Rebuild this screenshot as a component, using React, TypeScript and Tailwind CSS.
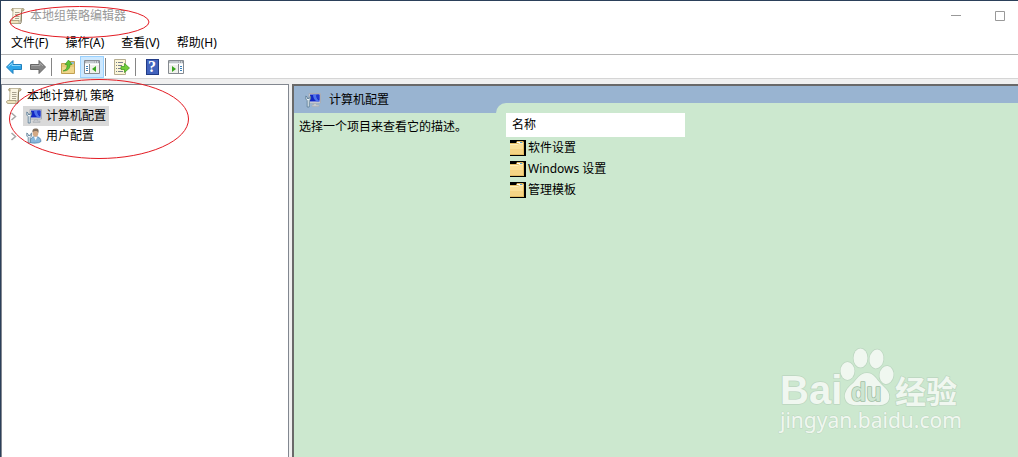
import React from "react";

function ScrollIcon() {
  return (
    <svg width="16" height="16" viewBox="0 0 16 16" aria-hidden="true" className="shrink-0">
      <path d="M3 .5h10.500c1.800 0 1.800 2.500 0 2.500H12.500l-.5 10H3.500L4 2.500" fill="#fbf6e3" stroke="#b3a98c" strokeWidth=".8" />
      <path d="M4 .5C2 .5 2 3 4 3z" fill="#cdbf94" stroke="#a39873" strokeWidth=".8" />
      <path d="M12.500 3h1.500c1.300-.3 1.300-2.300 0-2.500-1.300.2-1.500 1.300-1.500 2.500z" fill="#d9cda6" stroke="#998e6d" strokeWidth=".8" />
      <path d="M1.500 12.500h8.500c-.4 1.500.3 2.800 1.500 3H2C.2 15.300.2 12.800 1.500 12.500z" fill="#eee2bc" stroke="#a39873" strokeWidth=".8" />
      <path d="M12.500 3.500l-.3 9.500c0 1.500-.3 2.500-1.200 2.500" fill="none" stroke="#7f7659" />
      <path d="M6 4.500h4.500M6 6.500h4.500M6 8.500h4.500M6 10.500h4" stroke="#aaa390" />
    </svg>
  );
}

function ComputerIcon() {
  return (
    <svg width="16" height="16" viewBox="0 0 16 16" aria-hidden="true" className="shrink-0">
      <path d="M4 1.500h11.500v9.500H4z" fill="#dfe1e5" stroke="#a9adb5" />
      <path d="M5 2.500h9.500v7H5z" fill="#1226c4" />
      <path d="M8 2.500h3.500c-.5 3 .5 5 3 6.500v.5H12C9 8 8 5 8 2.500z" fill="#4f74ea" />
      <path d="M11.500 2.500h3V8c-2.500-1-3.300-3-3-5.500z" fill="#2038cf" />
      <path d="M8.500 11.500h3v1.500H14v1.500H7v-1.500h1.500z" fill="#c6c9ce" stroke="#a5a8ae" strokeWidth=".5" />
      <path d="M.8 4v3l1.400 1.500V15h2V8.500L5.600 7V4L4.300 5.200v1.300H2.200V5.200z" fill="#edf3f7" stroke="#53758f" strokeWidth=".8" />
    </svg>
  );
}

function UserIcon() {
  return (
    <svg width="16" height="16" viewBox="0 0 16 16" aria-hidden="true" className="shrink-0">
      <path d="M4 14.500c0-4 2-6 5.500-6s5.500 2 5.500 5c-2 2-9 2-11 1z" fill="#86b7dc" stroke="#4a7ba5" strokeWidth=".7" />
      <path d="M8 8.500l1.500 4 2-4z" fill="#f2f7fb" />
      <ellipse cx="9.500" cy="5" rx="2.800" ry="3.800" fill="#d3a985" />
      <path d="M6.500 4.500C6 1.500 7.500.3 9.500.5c3-.2 3.700 2 2.700 4.500-.3-1.500-1-2-2.200-2-1.500 0-2.500.3-3.500 1.500z" fill="#82705f" />
      <path d="M.8 5v3l1.400 1.500V15h2V9.500L5.600 8V5L4.300 6.200v1.300H2.200V6.200z" fill="#edf3f7" stroke="#53758f" strokeWidth=".8" />
    </svg>
  );
}

function ArrowIcon({ forward = false }: { forward?: boolean }) {
  return forward ? (
    <svg width="16" height="16" viewBox="0 0 16 16" aria-hidden="true">
      <path d="M15.500 8L9 1.500v4H.5v5H9v4z" fill="#858585" stroke="#686868" strokeLinejoin="round" />
      <path d="M1.500 6.500H10v-2.500l3 3" fill="none" stroke="#aaa" />
    </svg>
  ) : (
    <svg width="16" height="16" viewBox="0 0 16 16" aria-hidden="true">
      <path d="M.5 8L7 1.500v4h8.500v5H7v4z" fill="#2da5e8" stroke="#1f7fbd" strokeLinejoin="round" />
      <path d="M2.500 7.500L6 4v2.500h8.500" fill="none" stroke="#8bd7fb" />
    </svg>
  );
}

function UpFolderIcon() {
  return (
    <svg width="16" height="16" viewBox="0 0 16 16" aria-hidden="true">
      <path d="M1.500 4.500h6l1-2h6v12h-13z" fill="#e8c978" stroke="#c1a052" />
      <path d="M2 8h12v6H2z" fill="#f0d68b" />
      <path d="M11 3h3v2h-3z" fill="#93b9cc" />
      <path d="M3 12c3-1 4.500-3 4-6.500H5L8.500 1 12 5.500h-2C10 9.500 8 12 3 12z" fill="#5fc236" stroke="#35901d" strokeWidth=".6" />
    </svg>
  );
}

function PaneIcon({ mirrored = false }: { mirrored?: boolean }) {
  return (
    <svg width="16" height="14" viewBox="0 0 16 14" aria-hidden="true">
      <path d="M.5.5h15v13H.5z" fill="#fff" stroke="#858a90" />
      <path d="M1 1h14v3H1z" fill="#9ca2a9" />
      <path d="M1.500 2h9M1 3.500h14" stroke="#e9edf0" />
      <path d="M11 2h1m1 0h1" stroke="#fff" />
      {mirrored ? (
        <>
          <path d="M1 5h9v8H1z" fill="#f0f1ec" />
          <path d="M10.500 4v9" stroke="#858a90" />
          <path d="M12 6.500h2m-2 2h2m-2 2h2" stroke="#3c83bc" />
          <path d="M4 6l4 3-4 3z" fill="#38a51e" />
        </>
      ) : (
        <>
          <path d="M6 5h9v8H6z" fill="#f0f1ec" />
          <path d="M5.500 4v9" stroke="#858a90" />
          <path d="M2 6.500h2m-2 2h2m-2 2h2" stroke="#3c83bc" />
          <path d="M12 6L8 9l4 3z" fill="#38a51e" />
        </>
      )}
    </svg>
  );
}

function ExportIcon() {
  return (
    <svg width="16" height="16" viewBox="0 0 16 16" aria-hidden="true">
      <path d="M.5.5h11v15H.5z" fill="#fcf6d7" stroke="#b5ad90" />
      <path d="M2 3.500h1m1 0h5M2 6.500h1m1 0h4M2 9.500h1m1 0h3M2 12.500h1m1 0h5" stroke="#777f8c" />
      <path d="M7 7.500h3.500V4.500L15.500 9l-5 4.500v-3H7z" fill="#72ce38" stroke="#439d24" strokeWidth=".8" />
    </svg>
  );
}

function HelpIcon() {
  return (
    <span className="flex h-4 w-[13px] items-center justify-center border border-[#223c87] bg-[#4263bd] font-['Liberation_Serif',serif] text-base font-bold leading-4 text-white">?</span>
  );
}

function FolderIcon() {
  return (
    <svg width="16" height="16" viewBox="0 0 16 16" aria-hidden="true" className="shrink-0">
      <path d="M0 0h16v16H0z" fill="#000" />
      <path d="M0 3h6l1-2h6l1 1v13H0z" fill="#e3bb62" />
      <path d="M0 4h13v10H0z" fill="#fadf98" />
      <path d="M0 9h13v5H0z" fill="#f5d485" />
      <path d="M7 2h5v1H7z" fill="#fff" />
      <path d="M10 2h2v1h-2z" fill="#4e9bd5" />
      <path d="M0 4.500h8l1-1h4" fill="none" stroke="#fff0bd" />
    </svg>
  );
}

function ToolButton({ label, active = false, children }: { label: string; active?: boolean; children: React.ReactNode }) {
  return (
    <button
      type="button"
      aria-label={label}
      className={active
        ? "flex h-[22px] w-6 items-center justify-center border border-[#99d1ff] bg-[#cce8ff]"
        : "flex h-[22px] w-6 items-center justify-center hover:bg-[#e5f3ff]"}
    >
      {children}
    </button>
  );
}

function Divider() {
  return <span className="ml-px mr-1 h-[18px] w-px bg-[#858585]" />;
}

function Branch({ label, selected = false, children }: { label: string; selected?: boolean; children: React.ReactNode }) {
  return (
    <li role="treeitem" aria-selected={selected} className="flex h-5 items-center pl-2">
      <svg width="7" height="9" viewBox="0 0 7 9" aria-hidden="true" className="mr-1.5">
        <path d="M1.500 1l4 3.500-4 3.500" fill="none" stroke="#a6a6a6" strokeWidth="1.500" />
      </svg>
      <span className={selected ? "flex h-5 items-center gap-1 bg-[#d9d9d9] px-[3px]" : "flex h-5 items-center gap-1 px-[3px]"}>
        {children}
        {label}
      </span>
    </li>
  );
}

function Watermark() {
  return (
    <svg width="190" height="94" viewBox="0 0 190 94" className="absolute bottom-5 right-[52px]" role="img" aria-label="Baidu 经验 jingyan.baidu.com">
      <g fill="#f0f7f0" stroke="#bcd6c0" strokeWidth="1.500" paintOrder="stroke" strokeLinejoin="round">
        <text x="4" y="61" fontFamily="Liberation Sans, sans-serif" fontSize="40" fontWeight="700">Bai</text>
        <ellipse cx="71.500" cy="28" rx="7" ry="9" />
        <ellipse cx="84.500" cy="15" rx="7" ry="9.500" />
        <ellipse cx="100.500" cy="16" rx="7" ry="9.500" transform="rotate(8 100.500 16)" />
        <ellipse cx="110.500" cy="32" rx="7" ry="9" transform="rotate(8 110.500 32)" />
        <path d="M91 30c-8 0-10 7-15 11s-8 9-7 14c2 9 12 7 22 7s20 2 22-6c1.500-7-3-10-8-15-5-5-7-11-14-11z" />
        <text x="75" y="58" fontFamily="Liberation Sans, sans-serif" fontSize="25" fontWeight="700" fill="#cde5d1" stroke="#9fbda4">du</text>
        <text x="119" y="60" fontFamily="Noto Sans CJK SC, sans-serif" fontSize="31" fontWeight="700">经验</text>
        <text x="4" y="85" fontFamily="Noto Sans, sans-serif" fontSize="21" strokeWidth="1">jingyan.baidu.com</text>
      </g>
    </svg>
  );
}

export default function App() {
  return (
    <div className="relative flex min-h-screen flex-col border-l border-t border-[#2b405a] bg-white font-['Noto_Sans','Noto_Sans_CJK_SC',sans-serif] text-xs text-black">
      <header className="flex h-[30px] items-center pl-2 pr-2">
        <ScrollIcon />
        <h1 className="ml-[5px] text-[#999999]">本地组策略编辑器</h1>
        <div className="ml-auto flex items-center gap-6">
          <button type="button" aria-label="最小化" className="flex h-5 w-5 items-center justify-center">
            <svg width="10" height="10" aria-hidden="true"><path d="M0 4.500h10" stroke="#999" /></svg>
          </button>
          <button type="button" aria-label="最大化" className="flex h-5 w-5 items-center justify-center">
            <svg width="10" height="10" aria-hidden="true"><path d="M.5.500h9v9h-9z" fill="none" stroke="#999" /></svg>
          </button>
        </div>
      </header>
      <nav className="flex h-6 items-center gap-[17px] border-b border-[#b5b5b5] pl-2.5">
        <button type="button">文件(F)</button>
        <button type="button">操作(A)</button>
        <button type="button">查看(V)</button>
        <button type="button">帮助(H)</button>
      </nav>
      <div role="toolbar" className="flex h-6 items-center border-b border-[#d5d5d5] pl-px">
        <ToolButton label="后退"><ArrowIcon /></ToolButton>
        <ToolButton label="前进"><ArrowIcon forward /></ToolButton>
        <Divider />
        <ToolButton label="上一级"><UpFolderIcon /></ToolButton>
        <ToolButton label="显示控制台树" active><PaneIcon /></ToolButton>
        <Divider />
        <ToolButton label="导出列表"><ExportIcon /></ToolButton>
        <Divider />
        <ToolButton label="帮助"><HelpIcon /></ToolButton>
        <ToolButton label="显示操作窗格"><PaneIcon mirrored /></ToolButton>
      </div>
      <main className="flex flex-1 bg-[#f0f0f0] pt-[5px]">
        <aside className="w-72 shrink-0 border border-b-0 border-[#828790] bg-white pt-px">
          <ul role="tree" aria-label="策略">
            <li role="treeitem" aria-expanded="true">
              <div className="flex h-5 items-center gap-[5px] pl-1"><ScrollIcon /><span>本地计算机 策略</span></div>
              <ul role="group">
                <Branch label="计算机配置" selected><ComputerIcon /></Branch>
                <Branch label="用户配置"><UserIcon /></Branch>
              </ul>
            </li>
          </ul>
        </aside>
        <section className="relative ml-[3px] flex min-w-0 flex-1 border-l-2 border-t-2 border-[#696969] bg-[#cce8cf]">
          <div className="w-[202px] shrink-0">
            <h2 className="flex h-[27px] items-center gap-2 bg-[#99b4d1] pl-[11px]"><ComputerIcon />计算机配置</h2>
            <p className="px-[5px] py-1 leading-5">选择一个项目来查看它的描述。</p>
          </div>
          <div className="min-w-0 flex-1">
            <div className="h-[27px] bg-[#99b4d1] pt-[17px]">
              <div className="h-2.5 rounded-tl-[10px] bg-[#cce8cf]" />
            </div>
            <table className="ml-2.5 w-[179px] border-collapse text-left">
              <thead>
                <tr className="h-6 bg-white"><th scope="col" className="p-0 pl-1.5 font-normal">名称</th></tr>
              </thead>
              <tbody>
                {["软件设置", "Windows 设置", "管理模板"].map((name) => (
                  <tr key={name} className="h-[21px]">
                    <td className="p-0 pl-1"><span className="flex items-center gap-0.5"><FolderIcon />{name}</span></td>
                  </tr>
                ))}
              </tbody>
            </table>
          </div>
          <Watermark />
        </section>
      </main>
      <svg width="142" height="34" viewBox="0 0 142 34" className="pointer-events-none absolute left-2 top-1" aria-hidden="true">
        <ellipse cx="70.500" cy="17" rx="69.500" ry="15.500" fill="none" stroke="#e31b23" />
      </svg>
      <svg width="182" height="82" viewBox="0 0 182 82" className="pointer-events-none absolute left-[7px] top-[77px]" aria-hidden="true">
        <ellipse cx="91" cy="41" rx="89.500" ry="39.500" fill="none" stroke="#e31b23" />
      </svg>
    </div>
  );
}
